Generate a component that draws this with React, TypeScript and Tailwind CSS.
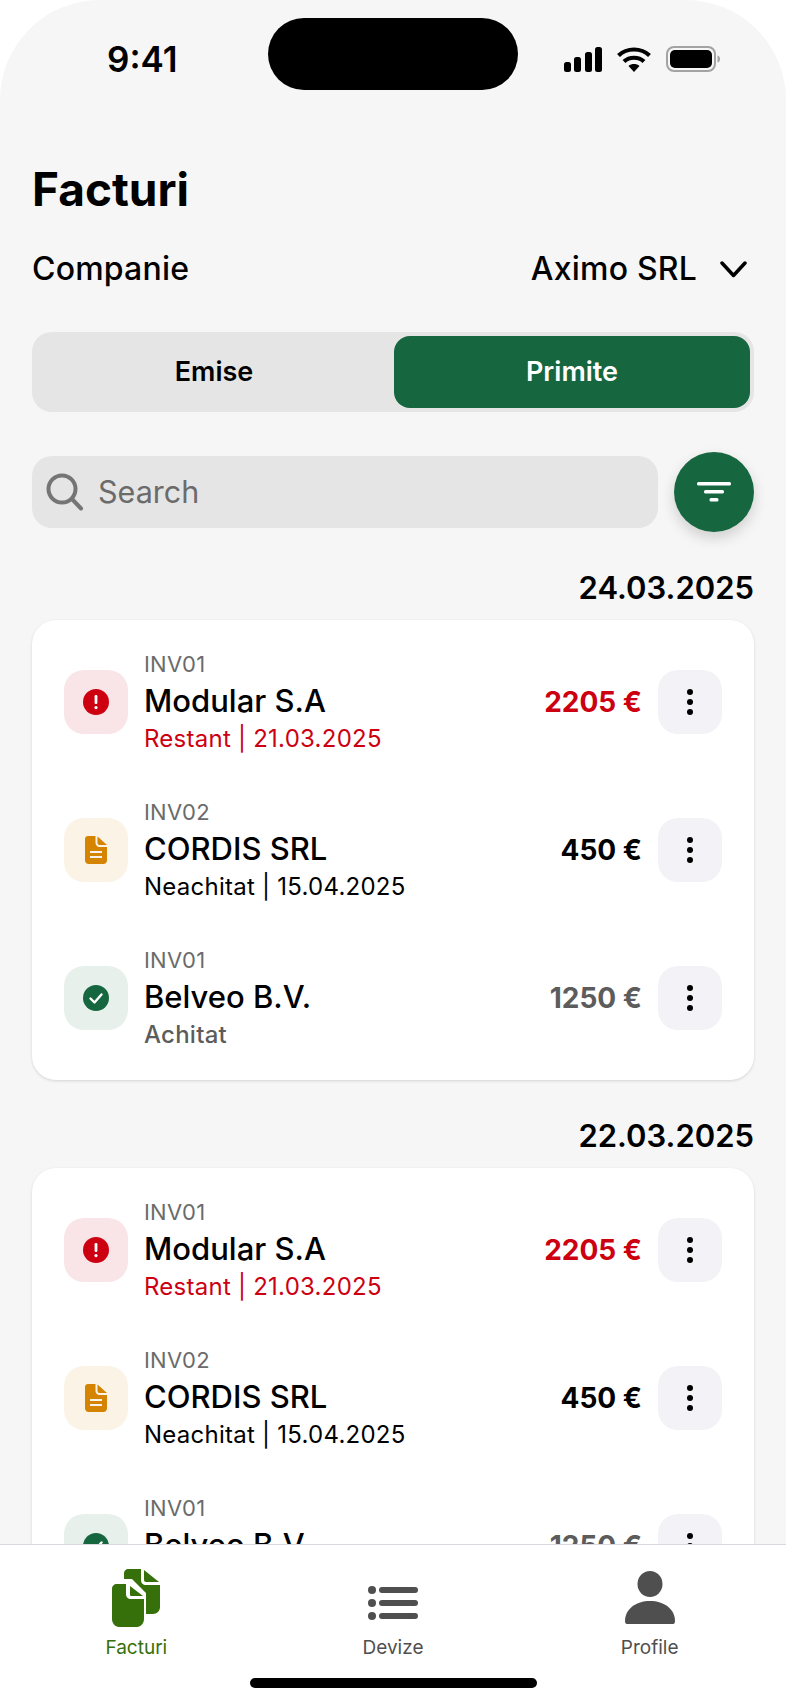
import React from "react";

const GREEN = "#166640";

function AlertIcon() {
  return (
    <svg width="26" height="26" viewBox="0 0 26 26">
      <circle cx="13" cy="13" r="13" fill="#cc0011" />
      <rect x="11.6" y="6" width="2.8" height="9" rx="1.2" fill="#fff" />
      <circle cx="13" cy="18.6" r="1.6" fill="#fff" />
    </svg>
  );
}
function DocIcon() {
  return (
    <svg width="22" height="28" viewBox="0 0 22 28">
      <path d="M3 0H10.5V7C10.5 9.2 12.3 11 14.5 11H22V24.500C22 26.400 20.400 28 18.500 28H3.500C1.600 28 0 26.400 0 24.500V3C0 1.300 1.300 0 3 0Z" fill="#d48400" />
      <path d="M12.500 0.500L22 9H14.500C13.400 9 12.500 8.100 12.500 7Z" fill="#d48400" />
      <rect x="5" y="15" width="12" height="2" fill="#fff" opacity="0.9" />
      <rect x="5" y="20" width="12" height="2" fill="#fff" opacity="0.9" />
    </svg>
  );
}
function CheckIcon() {
  return (
    <svg width="26" height="26" viewBox="0 0 26 26">
      <circle cx="13" cy="13" r="13" fill={GREEN} />
      <path d="M7.500 13.500L11.500 17.500L18.500 9.500" fill="none" stroke="#fff" strokeWidth="2.400" strokeLinecap="round" strokeLinejoin="round" />
    </svg>
  );
}
function Dots() {
  return (
    <svg width="8" height="28" viewBox="0 0 8 28">
      <circle cx="4" cy="4" r="3" fill="#000" />
      <circle cx="4" cy="14" r="3" fill="#000" />
      <circle cx="4" cy="24" r="3" fill="#000" />
    </svg>
  );
}

type Kind = "late" | "open" | "paid";
const rows: { inv: string; name: string; status: string; amount: string; kind: Kind }[] = [
  { inv: "INV01", name: "Modular S.A", status: "Restant | 21.03.2025", amount: "2205 €", kind: "late" },
  { inv: "INV02", name: "CORDIS SRL", status: "Neachitat | 15.04.2025", amount: "450 €", kind: "open" },
  { inv: "INV01", name: "Belveo B.V.", status: "Achitat", amount: "1250 €", kind: "paid" },
];

function Row({ r }: { r: (typeof rows)[number] }) {
  const tone =
    r.kind === "late" ? "text-[#cc0011]" : r.kind === "open" ? "text-black" : "text-[#5c5c5c]";
  const box =
    r.kind === "late" ? "bg-[#f9e5e7]" : r.kind === "open" ? "bg-[#fbf3e6]" : "bg-[#e8f0ec]";
  return (
    <div className="flex h-[148px] items-center pl-8 pr-8">
      <div className={`flex h-16 w-16 shrink-0 items-center justify-center rounded-[20px] ${box}`}>
        {r.kind === "late" ? <AlertIcon /> : r.kind === "open" ? <DocIcon /> : <CheckIcon />}
      </div>
      <div className="ml-4 flex min-w-0 flex-1 flex-col">
        <div className="text-[22px] leading-[28px] tracking-[0.2px] text-[#6b6b6b]">{r.inv}</div>
        <div className="mt-[4px] text-[31px] leading-[38px] font-medium text-black">{r.name}</div>
        <div className={`mt-[4px] text-[24px] leading-[30px] tracking-[0.25px] ${r.kind === "paid" ? "font-medium" : ""} ${tone}`}>
          {r.status}
        </div>
      </div>
      <div className={`mr-4 text-[28px] font-bold ${tone}`}>{r.amount}</div>
      <button className="flex h-16 w-16 shrink-0 items-center justify-center rounded-[20px] bg-[#f2f2f7]">
        <Dots />
      </button>
    </div>
  );
}

function Group({ date }: { date: string }) {
  return (
    <section>
      <div className="text-right text-[31px] leading-[40px] font-semibold text-black">{date}</div>
      <div className="mt-[12px] rounded-[24px] bg-white py-2 shadow-[0_1px_3px_rgba(0,0,0,0.14)]">
        {rows.map((r, i) => (
          <Row key={i} r={r} />
        ))}
      </div>
    </section>
  );
}

function StatusIcons() {
  return (
    <div className="flex items-center">
      <svg width="40" height="26" viewBox="0 0 40 26">
        <rect x="1" y="16" width="7" height="10" rx="2.500" fill="#000" />
        <rect x="11" y="11" width="7" height="15" rx="2.500" fill="#000" />
        <rect x="22" y="6" width="7" height="20" rx="2.500" fill="#000" />
        <rect x="32" y="1" width="7" height="25" rx="2.500" fill="#000" />
      </svg>
      <svg className="ml-[13px]" width="36" height="26" viewBox="0 0 36 26">
        <path d="M18 26L12.500 20C15.500 17.400 20.500 17.400 23.500 20Z" fill="#000" />
        <path d="M8 15.500C13.500 10.500 22.500 10.500 28 15.500" fill="none" stroke="#000" strokeWidth="4.200" />
        <path d="M2.500 9.500C11 1.500 25 1.500 33.500 9.500" fill="none" stroke="#000" strokeWidth="4.200" />
      </svg>
      <svg className="ml-[14px]" width="55" height="26" viewBox="0 0 55 26">
        <rect x="1" y="1" width="48" height="24" rx="7" fill="none" stroke="#a3a3a3" strokeWidth="2" />
        <rect x="4" y="4" width="42" height="18" rx="5" fill="#000" />
        <path d="M51.500 9.500C53.500 10 54 11.500 54 13C54 14.500 53.500 16 51.500 16.500Z" fill="#a3a3a3" />
      </svg>
    </div>
  );
}

export default function App() {
  return (
    <div className="h-[1704px] w-[786px] bg-white [font-family:Inter,'Noto_Sans',sans-serif]">
      <div className="flex h-full flex-col overflow-hidden rounded-t-[100px] bg-[#f6f6f6]">
        <div className="relative h-[90px] shrink-0">
          <div className="absolute top-[18px] left-[268px] h-[72px] w-[250px] rounded-[36px] bg-black" />
          <div className="absolute top-[38px] left-[107px] text-[35px] leading-[42px] font-semibold text-black">9:41</div>
          <div className="absolute top-[46px] left-[563px]">
            <StatusIcons />
          </div>
        </div>
        <main className="min-h-0 flex-1 overflow-hidden px-8">
          <h1 className="mt-[71px] text-[46px] leading-[56px] font-bold text-black">Facturi</h1>
          <div className="mt-[32px] flex h-[40px] items-center text-[32px] tracking-[0.2px] font-medium text-black">
            <span>Companie</span>
            <span className="ml-auto">Aximo SRL</span>
            <svg className="mr-[7px] ml-[23px]" width="27" height="17" viewBox="0 0 27 17">
              <path d="M2 2L13.500 14.500L25 2" fill="none" stroke="#000" strokeWidth="3.500" strokeLinecap="round" strokeLinejoin="round" />
            </svg>
          </div>
          <div className="mt-[43px] flex h-[80px] rounded-[20px] bg-[#e5e5e5] p-1">
            <div className="flex flex-1 items-center justify-center pr-[2px] text-[27px] font-semibold text-black">Emise</div>
            <div className="flex h-[72px] w-[356px] items-center justify-center rounded-[16px] bg-[#166640] text-[27px] font-semibold text-white">Primite</div>
          </div>
          <div className="mt-[40px] flex items-center gap-[16px]">
            <div className="flex h-[72px] flex-1 items-center rounded-[20px] bg-[#e5e5e5] pl-[14px]">
              <svg width="38" height="38" viewBox="0 0 38 38">
                <circle cx="16" cy="16" r="13.500" fill="none" stroke="#757575" strokeWidth="4" />
                <path d="M26 26L35 35.500" stroke="#757575" strokeWidth="4" strokeLinecap="round" />
              </svg>
              <span className="ml-[14px] text-[30.500px] text-[#6b6b6b]">Search</span>
            </div>
            <button className="flex h-[80px] w-[80px] shrink-0 items-center justify-center rounded-full bg-[#166640] shadow-[0_6px_14px_rgba(0,0,0,0.16)]">
              <svg width="36" height="20" viewBox="0 0 36 20">
                <rect x="1" y="0" width="34" height="3.500" rx="1.500" fill="#fff" />
                <rect x="8" y="8" width="20" height="3.500" rx="1.500" fill="#fff" />
                <rect x="13.500" y="16" width="9" height="3.500" rx="1.500" fill="#fff" />
              </svg>
            </button>
          </div>
          <div className="mt-[36px] flex flex-col gap-[36px]">
            <Group date="24.03.2025" />
            <Group date="22.03.2025" />
          </div>
        </main>
        <nav className="relative h-[160px] shrink-0 border-t border-[#d9d9e0] bg-white px-2">
          <div className="grid grid-cols-3">
            <div className="flex flex-col items-center">
              <div className="flex h-[84px] items-end pb-[2px]">
                <svg width="50" height="58" viewBox="0 0 50 58">
                  <path d="M17 0H30V11C30 14 32 16 35 16H49V38C49 42 46 45 42 45H35V24L21 10H13V4C13 2 15 0 17 0Z" fill="#36700a" />
                  <path d="M33 1L48 13H35C34 13 33 12 33 11Z" fill="#36700a" />
                  <path d="M6 15H15V25C15 28 17 30 20 30H33V50C33 54 30 58 26 58H8C4 58 1 54 1 50V20C1 17 3 15 6 15Z" fill="#36700a" />
                  <path d="M19 17L32 27H20C19 27 19 26 19 25Z" fill="#36700a" />
                </svg>
              </div>
              <span className="mt-[5px] text-[19px] leading-[28px] text-[#36700a]">Facturi</span>
            </div>
            <div className="flex flex-col items-center">
              <div className="flex h-[84px] items-end pb-[8px]">
                <svg width="50" height="36" viewBox="0 0 50 36">
                  <circle cx="4" cy="5" r="4" fill="#4f4f4f" />
                  <circle cx="4" cy="18" r="4" fill="#4f4f4f" />
                  <circle cx="4" cy="31" r="4" fill="#4f4f4f" />
                  <rect x="11" y="2" width="39" height="6" rx="3" fill="#4f4f4f" />
                  <rect x="11" y="15" width="39" height="6" rx="3" fill="#4f4f4f" />
                  <rect x="11" y="28" width="39" height="6" rx="3" fill="#4f4f4f" />
                </svg>
              </div>
              <span className="mt-[5px] text-[19px] leading-[28px] text-[#4f4f4f]">Devize</span>
            </div>
            <div className="flex flex-col items-center">
              <div className="flex h-[84px] items-end pb-[4px]">
                <svg width="50" height="54" viewBox="0 0 50 54">
                  <ellipse cx="25" cy="13" rx="12.500" ry="13" fill="#4f4f4f" />
                  <path d="M0 50C0 38 11 30 25 30C39 30 50 38 50 50C50 52.500 49 53 47 53H3C1 53 0 52.500 0 50Z" fill="#4f4f4f" />
                </svg>
              </div>
              <span className="mt-[5px] text-[19px] leading-[28px] text-[#4f4f4f]">Profile</span>
            </div>
          </div>
          <div className="absolute top-[133px] left-[250px] h-[10px] w-[287px] rounded-full bg-black" />
        </nav>
      </div>
    </div>
  );
}
